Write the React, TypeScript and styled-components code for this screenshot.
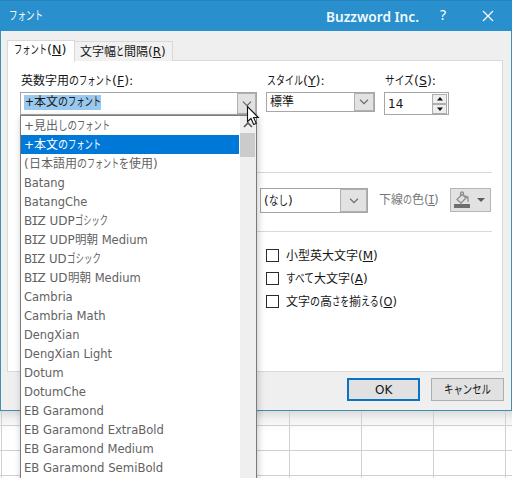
import React, { useLayoutEffect, useRef, useState } from "react";
import styled, { createGlobalStyle } from "styled-components";

const GlobalStyle = createGlobalStyle`
  * { box-sizing: border-box; }
  html, body { margin: 0; overflow: hidden; }
  body {
    font: 12px/18px "DejaVu Sans", "Noto Sans CJK JP", sans-serif;
    color: #161616;
  }
  u { text-underline-offset: 1px; text-decoration-thickness: 1px; }
`;

/* Narrow UI text: each run is condensed to its design width. */
const RunBox = styled.span<{ $w: number }>`
  display: inline-block;
  width: ${(p) => p.$w}px;
  white-space: pre;
  text-align: left;
`;
const RunText = styled.span`
  display: inline-block;
  transform-origin: 0 50%;
`;
const SerifI = styled.span`
  font-family: "DejaVu Sans Mono", monospace;
  margin: 0 -1px;
`;

function Run({ w, children }: { w: number; children: React.ReactNode }) {
  const ref = useRef<HTMLSpanElement>(null);
  const [scale, setScale] = useState(1);
  useLayoutEffect(() => {
    if (ref.current) setScale(w / ref.current.offsetWidth);
  }, [w]);
  return (
    <RunBox $w={w}>
      <RunText ref={ref} style={{ transform: `scaleX(${scale})` }}>{children}</RunText>
    </RunBox>
  );
}

const Line = styled.span`
  white-space: nowrap;
`;
type Part = [React.ReactNode, number];
const Text = ({ parts }: { parts: Part[] }) => (
  <Line>{parts.map(([t, w], i) => <Run key={i} w={w}>{t}</Run>)}</Line>
);

const Screen = styled.div`
  position: relative;
  width: 512px;
  height: 478px;
  overflow: hidden;
  background: #fff;
`;
const Dialog = styled.main`
  height: 411px;
  display: flex;
  flex-direction: column;
  background: #efefef;
  border: solid #3f8fae;
  border-width: 0 1px 1px;
  width: 512px;
`;
const TitleBar = styled.header`
  height: 31px;
  flex: none;
  display: flex;
  align-items: center;
  padding-left: 9px;
  margin: 0 -1px;
  background: #298fcd;
  border-top: 1px solid #2583bd;
  color: #fff;
`;
const Brand = styled.span`
  margin-left: auto;
  font: 600 15px/20px "Noto Sans", sans-serif;
  color: #f0f9ff;
`;
const HelpMark = styled.span`
  width: 8px;
  margin: -3px 0 0 21px;
  font: 14px/20px "Noto Sans", sans-serif;
`;
const CloseIcon = styled.svg`
  margin: -1px 18px 0 34px;
`;
const Tabs = styled.nav`
  display: flex;
  align-items: flex-end;
  height: 30px;
  flex: none;
  padding-left: 6px;
`;
const Tab = styled.div<{ $active?: boolean }>`
  width: ${(p) => (p.$active ? 68 : 98)}px;
  height: ${(p) => (p.$active ? 22 : 20)}px;
  padding: ${(p) => (p.$active ? "0 0 0 6px" : "1px 0 0 5px")};
  margin-bottom: ${(p) => (p.$active ? -1 : 0)}px;
  position: relative;
  border: 1px solid #d9d9d9;
  border-bottom: 0;
  border-left-width: ${(p) => (p.$active ? 1 : 0)}px;
  background: ${(p) => (p.$active ? "#fff" : "#f1f1f1")};
`;
const Panel = styled.section`
  margin: -1px 8px 0 6px;
  height: 312px;
  flex: none;
  border: 1px solid #d9d9d9;
  background: #fff;
  padding: 11px 9px 0 12px;
`;
const Fields = styled.div`
  display: grid;
  grid-template-columns: 237px 109px 66px;
  column-gap: 9px;
  height: 100px;
  align-content: start;
`;
const Field = styled.label`
  display: flex;
  flex-direction: column;
`;
const Caption = styled.span`
  height: 20px;
  padding-left: 1px;
`;
const Combo = styled.span<{ $w: number; $h: number }>`
  display: flex;
  flex: none;
  justify-content: space-between;
  align-items: center;
  width: ${(p) => p.$w}px;
  height: ${(p) => p.$h}px;
  border: 1px solid #a6a6a6;
  background: #fff;
  padding-left: 3px;
`;
const Arrow = styled.span<{ $w: number }>`
  width: ${(p) => p.$w}px;
  align-self: stretch;
  display: flex;
  align-items: center;
  justify-content: center;
  background: #e2e2e2;
  border: 1px solid #b0b0b0;
`;
const Selection = styled.span`
  background: #99c9ef;
  height: 15px;
  line-height: 15px;
  padding-left: 1px;
  margin-top: -2px;
`;
const Spinner = styled.span`
  display: flex;
  flex-direction: column;
  width: 15px;
  margin-right: 1px;
`;
const SpinButton = styled.span`
  height: 10px;
  display: flex;
  align-items: center;
  justify-content: center;
  border: 1px solid #adadad;
  background: #eee;
`;
const UnderlineRow = styled.div`
  height: 60px;
  margin-left: 231px;
  width: 241px;
  border: solid #d9d9d9;
  border-width: 1px 0;
  display: flex;
  align-items: flex-start;
  padding: 15px 1px 0 9px;
`;
const Disabled = styled.span`
  color: #777;
  margin: 3px 0 0 11px;
`;
const ColorButton = styled.span`
  width: 41px;
  height: 24px;
  flex: none;
  margin-left: auto;
  border: 1px solid #b5b5b5;
  background: #e2e2e2;
`;
const Checks = styled.div`
  margin: 12px 0 0 246px;
`;
const Check = styled.label`
  display: flex;
  align-items: center;
  height: 23px;
`;
const Box = styled.span`
  width: 13px;
  height: 13px;
  border: 1px solid #2b2b2b;
  margin-right: 7px;
`;
const Actions = styled.footer`
  display: flex;
  justify-content: flex-end;
  gap: 11px;
  padding: 6px 7px 0 0;
`;
const Button = styled.button<{ $primary?: boolean }>`
  width: 73px;
  height: 23px;
  padding: 0;
  font: inherit;
  line-height: 18px;
  color: inherit;
  background: #e1e1e1;
  border: ${(p) => (p.$primary ? "2px solid #0a73c4" : "1px solid #adadad")};
`;
const Sheet = styled.div`
  height: 67px;
  margin-left: -70px;
  display: grid;
  grid-template-columns: repeat(9, 72px);
  grid-template-rows: 15px 25px 25px 25px;
  background: linear-gradient(#dcdcdc, #f1f1f1 8px, #fcfcfc 17px, #fff 22px);
`;
const Cell = styled.div`
  border: solid #d0d0d0;
  border-width: 0 1px 1px 0;
`;
const Dropdown = styled.div`
  position: absolute;
  left: 20px;
  top: 115px;
  width: 237px;
  height: 380px;
  display: flex;
  border: 1px solid #7b7b7b;
  background: #fff;
  box-shadow: 1px 2px 7px rgba(0, 0, 0, 0.22);
`;
const List = styled.div`
  width: 218px;
  color: #626262;
`;
const Option = styled.div<{ $selected?: boolean }>`
  height: 19px;
  padding-left: 3px;
  line-height: 21px;
  white-space: nowrap;
  overflow: hidden;
  color: ${(p) => (p.$selected ? "#fff" : "inherit")};
  background: ${(p) => (p.$selected ? "#0078d7" : "transparent")};
`;
const Scrollbar = styled.div`
  width: 16px;
  margin-left: 1px;
  background: #efefef;
  display: flex;
  flex-direction: column;
`;
const Thumb = styled.div`
  width: 15px;
  height: 24px;
  background: #cbcbcb;
`;
const Cursor = styled.svg`
  position: absolute;
  left: 246px;
  top: 105px;
`;

const Chevron = () => (
  <svg width="10" height="6" viewBox="0 0 10 6">
    <path d="M1 .7 5 4.7 9 .7" fill="none" stroke="#666" strokeWidth="1.2" />
  </svg>
);
const Triangle = ({ up }: { up?: boolean }) => (
  <svg width="6" height="4"><path d={up ? "M0 3.5 3 0l3 3.5z" : "M0 .5 3 4l3-3.5z"} fill="#111" /></svg>
);
const key = (c: string) => <>(<u>{c}</u>)</>;
const biz = <>B<SerifI>I</SerifI>Z </>;

const fonts: Part[][] = [
  [["+", 10], ["見出", 24], ["しの", 19], ["フォント", 33]],
  [["+", 10], ["本文", 24], ["の", 10], ["フォント", 33]],
  [["(", 5], ["日本語用", 48], ["の", 10], ["フォント", 32], ["を", 10], ["使用", 24], [")", 5]],
  [["Batang", 41]],
  [["BatangChe", 63]],
  [[<>{biz}UDP</>, 51], ["ゴシック", 33]],
  [[<>{biz}UDP</>, 51], ["明朝", 23], [" Medium", 50]],
  [[<>{biz}UD</>, 43], ["ゴシック", 34]],
  [[<>{biz}UD</>, 44], ["明朝", 23], [" Medium", 50]],
  [["Cambria", 49]],
  [["Cambria Math", 82]],
  [["DengXian", 55]],
  [["DengXian Light", 88]],
  [["Dotum", 40]],
  [["DotumChe", 62]],
  [["EB Garamond", 80]],
  [["EB Garamond ExtraBold", 140]],
  [["EB Garamond Medium", 130]],
  [["EB Garamond SemiBold", 139]],
];

export default function App() {
  return (
    <Screen>
      <GlobalStyle />
      <Dialog>
        <TitleBar>
          <Run w={34}>フォント</Run>
          <Brand><Run w={93}>Buzzword Inc.</Run></Brand>
          <HelpMark>?</HelpMark>
          <CloseIcon width="12" height="12" viewBox="0 0 12 12">
            <path d="M1 1 11 11M11 1 1 11" stroke="#fff" strokeWidth="1.2" />
          </CloseIcon>
        </TitleBar>
        <Tabs>
          <Tab $active><Text parts={[["フォント", 33], [key("N"), 19]]} /></Tab>
          <Tab><Text parts={[["文字幅", 36], ["と", 8], ["間隔", 24], [key("R"), 18]]} /></Tab>
        </Tabs>
        <Panel>
          <Fields>
            <Field>
              <Caption><Text parts={[["英数字用", 48], ["の", 10], ["フォント", 33], [<>{key("F")}:</>, 21]]} /></Caption>
              <Combo $w={237} $h={23}>
                <Selection><Text parts={[["+", 9], ["本文", 24], ["の", 10], ["フォント", 33]]} /></Selection>
                <Arrow $w={19}><Chevron /></Arrow>
              </Combo>
            </Field>
            <Field>
              <Caption><Text parts={[["スタイル", 36], [<>{key("Y")}:</>, 22]]} /></Caption>
              <Combo $w={109} $h={20}>
                <Run w={24}>標準</Run>
                <Arrow $w={20}><Chevron /></Arrow>
              </Combo>
            </Field>
            <Field>
              <Caption><Text parts={[["サイズ", 29], [<>{key("S")}:</>, 22]]} /></Caption>
              <Combo $w={65} $h={23}>
                <Run w={15}>14</Run>
                <Spinner>
                  <SpinButton><Triangle up /></SpinButton>
                  <SpinButton><Triangle /></SpinButton>
                </Spinner>
              </Combo>
            </Field>
          </Fields>
          <UnderlineRow>
            <Combo $w={108} $h={25}>
              <Text parts={[["(", 5], ["なし", 19], [")", 5]]} />
              <Arrow $w={27}><Chevron /></Arrow>
            </Combo>
            <Disabled><Text parts={[["下線", 24], ["の", 9], ["色", 12], [<>(<u><SerifI>I</SerifI></u>)</>, 15]]} /></Disabled>
            <ColorButton>
              <svg width="39" height="22" viewBox="0 0 39 22">
                <path d="M9.5 8V4.5q0-1.5 1.5-1.5t1.5 1.5V6M11 5.5 6 10.5 10 14l5-5zM13 6.5l4 1.5v5M15 9l2-1" fill="none" stroke="#909090" strokeWidth="1.3" />
                <rect x="3" y="15" width="16" height="4" fill="#6e6e6e" />
                <path d="M26 9h8l-4 4z" fill="#5c5c5c" />
              </svg>
            </ColorButton>
          </UnderlineRow>
          <Checks>
            <Check><Box /><Text parts={[["小型英大文字", 72], [key("M"), 20]]} /></Check>
            <Check><Box /><Text parts={[["すべて", 28], ["大文字", 36], [key("A"), 18]]} /></Check>
            <Check><Box /><Text parts={[["文字", 24], ["の", 10], ["高", 12], ["さを", 17], ["揃", 12], ["える", 18], [key("O"), 18]]} /></Check>
          </Checks>
        </Panel>
        <Actions>
          <Button $primary><Run w={17}>OK</Run></Button>
          <Button><Run w={47}>キャンセル</Run></Button>
        </Actions>
      </Dialog>
      <Sheet>{Array.from({ length: 36 }, (_, i) => <Cell key={i} />)}</Sheet>
      <Dropdown>
        <List>
          {fonts.map((parts, i) => (
            <Option key={i} $selected={i === 1}><Text parts={parts} /></Option>
          ))}
        </List>
        <Scrollbar>
          <svg width="16" height="17"><path d="m4 11 4-4 4 4" fill="none" stroke="#555" strokeWidth="1.6" /></svg>
          <Thumb />
        </Scrollbar>
      </Dropdown>
      <Cursor width="14" height="21" viewBox="0 0 14 21">
        <path d="M1.5 1.5v15l3.5-3 2.7 6 2.5-1.1-2.6-5.9h4.7z" fill="#fff" stroke="#111" strokeWidth="1.1" />
      </Cursor>
    </Screen>
  );
}
